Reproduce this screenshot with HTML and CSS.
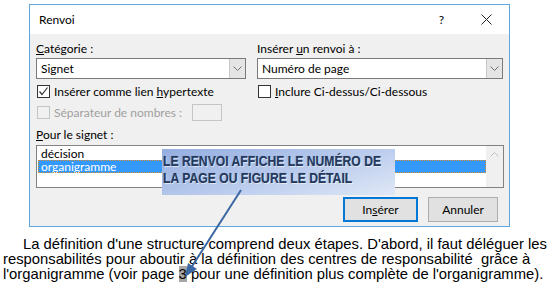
FILE: index.html
```html
<!DOCTYPE html>
<html lang="fr">
<head>
<meta charset="UTF-8">
<title>Renvoi</title>
<link rel="stylesheet" href="styles.css">
</head>
<body>
    <div class="dialog">
        <div class="titlebar">
            <span class="title">Renvoi</span>
            <span class="help">?</span>
            <svg class="close" width="11" height="11" viewBox="0 0 11 11">
                <path d="M0.5 0.5 L10.5 10.5 M10.5 0.5 L0.5 10.5" stroke="#222" stroke-width="1"/>
            </svg>
        </div>
        <div class="body">
            <div class="cols">
                <div class="col left">
                    <div class="label"><u>C</u>atégorie :</div>
                    <div class="combo">
                        <span class="combo-text">Signet</span>
                        <span class="combo-btn">
                            <svg width="9" height="5" viewBox="0 0 9 5"><path d="M0.5 0.5 L4.5 4.5 L8.5 0.5" fill="none" stroke="#707070"/></svg>
                        </span>
                    </div>
                    <div class="check-row">
                        <span class="box checked">
                            <svg width="11" height="11" viewBox="0 0 11 11"><path d="M1.5 5.5 L4 8.5 L9.5 1.5" fill="none" stroke="#333" stroke-width="1.2"/></svg>
                        </span>
                        <span>Insérer comme lien <u>h</u>ypertexte</span>
                    </div>
                    <div class="check-row disabled">
                        <span class="box"></span>
                        <span class="sep-label">Séparateur de nombres :</span>
                        <span class="small-input"></span>
                    </div>
                </div>
                <div class="col right">
                    <div class="label">Insérer <u>u</u>n renvoi à :</div>
                    <div class="combo">
                        <span class="combo-text">Numéro de page</span>
                        <span class="combo-btn">
                            <svg width="9" height="5" viewBox="0 0 9 5"><path d="M0.5 0.5 L4.5 4.5 L8.5 0.5" fill="none" stroke="#707070"/></svg>
                        </span>
                    </div>
                    <div class="check-row">
                        <span class="box"></span>
                        <span><u>I</u>nclure Ci-dessus/Ci-dessous</span>
                    </div>
                </div>
            </div>
            <div class="label signet-label"><u>P</u>our le signet :</div>
            <div class="listbox">
                <div class="items">
                    <div class="item">décision</div>
                    <div class="item selected">organigramme</div>
                </div>
                <div class="scroll">
                    <svg width="9" height="5" viewBox="0 0 9 5"><path d="M0.5 4.5 L4.5 0.5 L8.5 4.5" fill="none" stroke="#c0c0c0"/></svg>
                </div>
            </div>
            <div class="buttons">
                <button class="btn default">In<u>s</u>érer</button>
                <button class="btn">Annuler</button>
            </div>
        </div>
    </div>

    <div class="text">
        <div class="line first">La définition d'une structure comprend deux étapes. D'abord, il faut déléguer les</div>
        <div class="line">responsabilités pour aboutir à la définition des centres de responsabilité&nbsp; grâce à</div>
        <div class="line">l'organigramme (voir page <span class="field">3</span> pour une définition plus complète de l'organigramme). L</div>
    </div>

    <!-- bulle d'explication + flèche -->
    <div class="callout"><span class="callout-text">LE RENVOI AFFICHE LE NUMÉRO DE<br>LA PAGE OU FIGURE LE DÉTAIL</span></div>
    <svg class="arrow" width="80" height="110" viewBox="0 0 80 110">
        <path d="M61 4 L11 82" stroke="#3b67a3" stroke-width="2"/>
        <path d="M5 91 L8 77 L17 83 Z" fill="#3b67a3"/>
    </svg>
</body>
</html>
```

FILE: styles.css
```css
body{
    margin: 0;
    background: #fff;
    width: 548px;
    height: 290px;
    overflow: hidden;
    position: relative;
    font-family: Lato, "Noto Sans", sans-serif;
}
.dialog{
    margin: 4px 0 0 29px;
    width: 481px;
    height: 223px;
    box-sizing: border-box;
    border: 1px solid #5ea7e0;
    display: flex;
    flex-direction: column;
}
.titlebar{
    height: 29px;
    background: #fff;
    display: flex;
    align-items: center;
    font-size: 12px;
    color: #000;
}
.title{
    margin-left: 9px;
    flex: 1;
}
.help{
    margin-right: 37px;
}
.close{
    margin-right: 17px;
}
.body{
    flex: 1;
    background: #f0f0f0;
    padding: 7px 5px 0 6px;
    font-size: 12px;
    color: #000;
}
.cols{
    display: flex;
    gap: 11px;
}
.col.left{
    width: 210px;
}
.col.right{
    width: 246px;
}
.label{
    height: 15px;
    line-height: 15px;
    margin-bottom: 2px;
}
.combo{
    height: 21px;
    box-sizing: border-box;
    border: 1px solid #7a7a7a;
    background: #fff;
    display: flex;
    align-items: center;
}
.combo-text{
    flex: 1;
    padding-left: 4px;
}
.combo-btn{
    width: 15px;
    height: 19px;
    background: #e5e5e5;
    border-left: 1px solid #c8c8c8;
    display: flex;
    align-items: center;
    justify-content: center;
}
.check-row{
    display: flex;
    align-items: center;
    height: 16px;
    margin-top: 4px;
}
.check-row.disabled{
    color: #a0a0a0;
    margin-top: 5px;
}
.box{
    width: 13px;
    height: 13px;
    box-sizing: border-box;
    border: 1px solid #333;
    background: #fff;
    margin: 0 4px 0 1px;
    display: flex;
    align-items: center;
    justify-content: center;
}
.disabled .box{
    border-color: #c5c5c5;
    background: #f0f0f0;
}
.sep-label{
    width: 138px;
}
.small-input{
    width: 30px;
    height: 17px;
    box-sizing: border-box;
    border: 1px solid #c5c5c5;
}
.signet-label{
    margin-top: 7px;
    margin-bottom: 3px;
}
.listbox{
    height: 43px;
    box-sizing: border-box;
    border: 1px solid #828282;
    background: #fff;
    display: flex;
}
.items{
    flex: 1;
    padding: 1px 0 0 1px;
}
.item{
    height: 13px;
    line-height: 13px;
    padding-left: 3px;
}
.item.selected{
    background: #3399ff;
    color: #fff;
    outline: 1px dotted #d98c2a;
    outline-offset: -1px;
}
.scroll{
    width: 17px;
    background: #f0f0f0;
    display: flex;
    justify-content: center;
    padding-top: 6px;
    box-sizing: border-box;
}
.buttons{
    display: flex;
    justify-content: flex-end;
    gap: 10px;
    margin-top: 9px;
    padding-right: 6px;
}
.btn{
    height: 25px;
    box-sizing: border-box;
    background: #e1e1e1;
    border: 1px solid #adadad;
    font-family: inherit;
    font-size: 12px;
    padding: 0;
    color: #000;
}
.btn.default{
    width: 75px;
    border: 2px solid #0078d7;
}
.btn:not(.default){
    width: 70px;
}
.text{
    margin-top: 10px;
    font-family: "Liberation Sans", Arial, sans-serif;
    font-size: 14.8px;
    color: #000;
}
.line{
    height: 15px;
    line-height: 15px;
    white-space: nowrap;
    padding-left: 3px;
}
.line.first{
    padding-left: 23px;
}
.field{
    background: #a6a6a6;
}
.callout{
    position: absolute;
    left: 162px;
    top: 149px;
    width: 233px;
    height: 46px;
    box-sizing: border-box;
    padding: 4px 0 0 1px;
    background: linear-gradient(165deg, #94aee0 0%, #b7c9ec 50%, #dfe8f6 100%);
}
.callout-text{
    display: block;
    transform: scaleX(0.84);
    transform-origin: left top;
    font-family: "Liberation Sans", sans-serif;
    font-weight: bold;
    font-size: 14.5px;
    line-height: 17px;
    color: #25395f;
    text-shadow: 1px 1px 1px rgba(255,255,255,0.7), 0 0 1px rgba(20,40,80,0.5);
    white-space: nowrap;
}
.arrow{
    position: absolute;
    left: 180px;
    top: 186px;
}
```
